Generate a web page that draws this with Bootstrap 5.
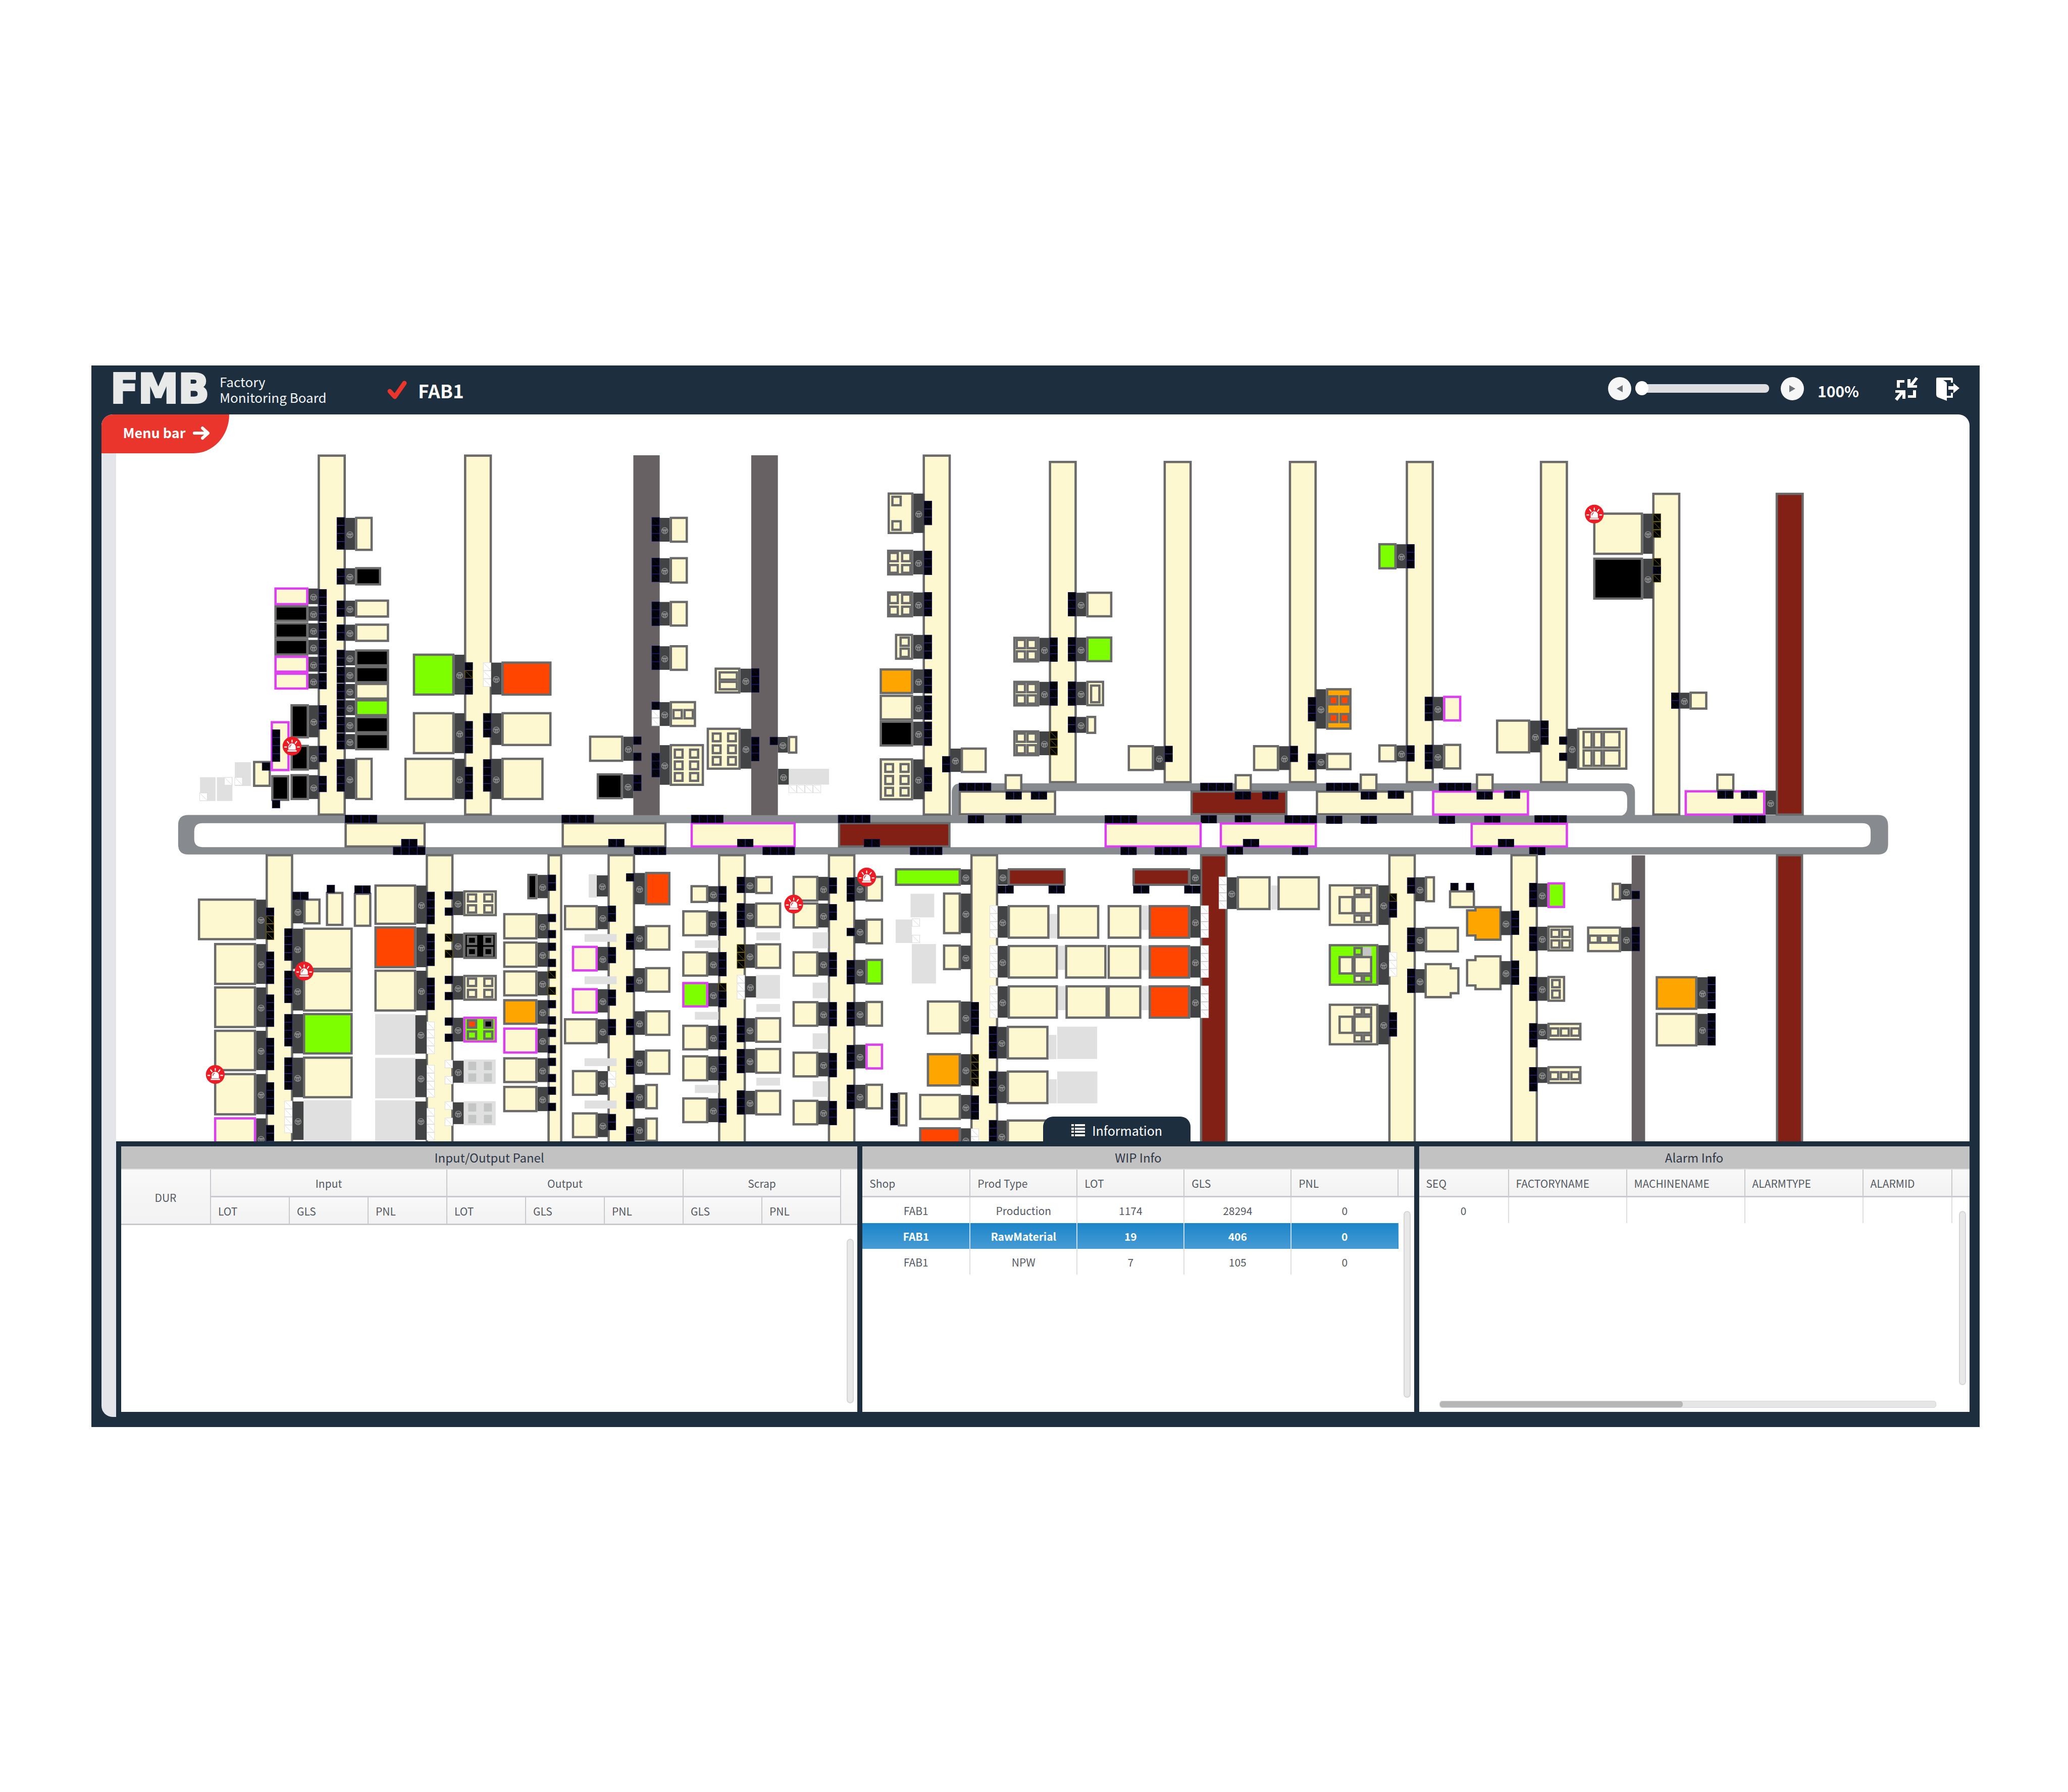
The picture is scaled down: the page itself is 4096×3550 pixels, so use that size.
<!DOCTYPE html>
<html lang="en">
<head>
<meta charset="utf-8">
<meta name="viewport" content="width=device-width, initial-scale=1">
<title>FMB Factory Monitoring Board</title>
<link href="https://cdn.jsdelivr.net/npm/bootstrap@5.3.0/dist/css/bootstrap.min.css" rel="stylesheet">
<style>
  :root { --navy: #1d2e3f; --red: #e9352c; --line: #c9cacf; }
  body { background: #fff; font-family: "Noto Sans CJK KR", "Noto Sans", sans-serif; color: #555b63; padding: 724px 175px 0 181px; }
  .board { background: var(--navy); padding-bottom: 20px; }
  .topbar { height: 97px; padding: 0 39px 0 38px; color: #fff; }
  .logo { font: 700 80px/92px "DejaVu Sans", sans-serif; color: #e8eae9; width: 216px; padding-bottom: 4px; -webkit-text-stroke: 4px #e8eae9; }
  .tagline { font-size: 26px; line-height: 31px; color: #f1f3f3; width: 332px; padding-bottom: 4px; }
  .fab { font-size: 37px; line-height: 48px; font-weight: 700; color: #fff; gap: 22px; }
  .round-btn { width: 46px; height: 46px; border: 0; border-radius: 50%; background: #f6f6f7; padding: 0; }
  .icon-btn { border: 0; background: none; padding: 0; color: #fff; line-height: 0; }
  .icon-btn + .icon-btn { margin-left: 35px; }
  .tools { padding-bottom: 6px; }
  .zoom-range { appearance: none; width: 265px; height: 28px; margin: 0 23px 0 8px; background: none; }
  .zoom-range::-webkit-slider-runnable-track { height: 17px; border-radius: 8px; background: #dedee0; }
  .zoom-range::-webkit-slider-thumb { appearance: none; width: 26px; height: 28px; margin-top: -6px; border-radius: 50%; background: #fff; }
  .zoom-value { font-size: 30px; line-height: 44px; font-weight: 700; margin: 8px 65px 0 27px; width: 86px; }
  .stage { margin: 0 20px; background: var(--navy); border-radius: 22px 22px 0 22px; overflow: hidden; }
  .menu-tab { left: 0; top: 0; width: 253px; height: 77px; border: 0; background: var(--red); color: #fff; font-size: 27px; font-weight: 700; border-radius: 22px 0 71px 0 / 22px 0 77px 0; z-index: 2; gap: 14px; padding: 0 0 4px 6px; }
  .rail-strip { flex: 0 0 29px; background: #e4e5eb; }
  .plan { background: #fff; }
  #plan { display: block; width: 100%; height: auto; }
  .info-tab { left: 54%; bottom: 0; width: 292px; height: 49px; transform: translateX(-50%); border: 0; background: var(--navy); color: #fff; font-size: 25px; line-height: 40px; border-radius: 20px 20px 0 0; gap: 14px; padding-top: 5px; }
  .panels { padding: 10px 0 10px 10px; gap: 10px; }
  .pane { background: #fff; height: 526px; flex-basis: 0; min-width: 0; overflow: hidden; }
  .pane h2 { margin: 0; height: 46px; font-size: 24px; line-height: 43px; font-weight: 400; text-align: center; color: #2f3848; background: #c2c2c2; border-bottom: 2px solid #dcdcde; }
  .grid { width: 100%; table-layout: fixed; border-collapse: separate; border-spacing: 0; font-size: 21px; line-height: 30px; }
  .grid th { font-weight: 400; height: 55px; padding: 2px 0 0 14px; background: linear-gradient(#f9f9f9, #f2f2f2); border-right: 2px solid var(--line); border-bottom: 3px solid var(--line); }
  .grid th:last-child { border-right: 0; }
  .grid th.mid { text-align: center; padding: 2px 0 0; }
  .grid th.edge { border-right: 2px solid var(--line); }
  .grid td { height: 51px; padding: 0; text-align: center; border-right: 2px solid #dedede; }
  .wip td:nth-child(5) { border-right-color: transparent; }
  .grid td:last-child { border-right: 0; }
  .grid tr.picked td:not(:last-child) { background: linear-gradient(#1b84c9, #479cd4); color: #fff; font-weight: 700; border-right-color: #c9def0; }
  .grid tr.picked td:nth-child(5) { border-right-color: #3591cf; }
  .vbar { right: 7px; width: 14px; border-radius: 7px; background: #e8e8e8; border: 2px solid #d6d6d6; }
  .io-bar { top: 183px; bottom: 17px; }
  .wip-bar { top: 128px; bottom: 28px; }
  .alarm-bar { top: 128px; bottom: 53px; }
  .hbar { left: 40px; right: 66px; bottom: 8px; height: 14px; border-radius: 5px; background: #e6e6e6; border: 1px solid #d6d6d6; }
  .hbar div { width: 49%; height: 100%; border-radius: 5px; background: #b6b6b6; }
</style>
<script src="https://cdn.jsdelivr.net/npm/bootstrap@5.3.0/dist/js/bootstrap.bundle.min.js"></script>
</head>
<body>
<div class="board">
  <header class="topbar d-flex align-items-center">
    <div class="logo">FMB</div>
    <div class="tagline">Factory<br>Monitoring Board</div>
    <div class="fab d-flex align-items-center">
      <svg width="39" height="38" viewBox="0 0 39 38" aria-hidden="true"><path d="M5 21 L15 32 L34 5" fill="none" stroke="#e9352c" stroke-width="9" stroke-linecap="round" stroke-linejoin="round"/></svg>
      <span>FAB1</span>
    </div>
    <div class="tools d-flex align-items-center ms-auto">
      <button class="round-btn" type="button" aria-label="Zoom out"><svg width="46" height="46" viewBox="0 0 46 46"><path d="M29 16v14L17 23z" fill="#6b7079"/></svg></button>
      <input class="zoom-range" type="range" min="100" max="400" value="100" aria-label="Zoom">
      <button class="round-btn" type="button" aria-label="Zoom in"><svg width="46" height="46" viewBox="0 0 46 46"><path d="M17 16v14l12-7z" fill="#6b7079"/></svg></button>
      <span class="zoom-value">100%</span>
      <button class="icon-btn" type="button" aria-label="Exit full screen"><svg width="48" height="48" viewBox="0 0 48 48" fill="currentColor"><path d="M6 7h15v5h-9v10H6zM44 27v15H28v-5h10V27z"/><path d="M27 5v17h19v-5h-8l10-13-5-3-10 13V5zM3 27h20v17h-6V35L7 48l-5-4 10-12H3z"/></svg></button>
      <button class="icon-btn" type="button" aria-label="Log out"><svg width="48" height="48" viewBox="0 0 48 48" fill="currentColor"><path d="M3 2h28q3 0 3 3v7h-4V7H15l7 5v26h8v-6h4v10H22v6L4 41q-3-2-3-5V5q0-3 2-3z"/><path d="M25 19h10v-6l12 10-12 10v-7H25z"/></svg></button>
    </div>
  </header>

  <main class="stage position-relative d-flex">
    <button class="menu-tab position-absolute d-flex align-items-center justify-content-center" type="button">Menu bar
      <svg width="36" height="28" viewBox="0 0 36 28" aria-hidden="true"><path d="M3 14h26M19 4l11 10-11 10" fill="none" stroke="#fff" stroke-width="6" stroke-linecap="round" stroke-linejoin="round"/></svg>
    </button>
    <div class="rail-strip"></div>
    <div class="flex-grow-1 overflow-hidden">
      <div class="plan position-relative">
        <svg id="plan" viewBox="252 902 4034 1583" role="img" aria-label="FAB1 floor plan"></svg>
        <button class="info-tab position-absolute d-flex align-items-center justify-content-center" type="button">
          <svg width="27" height="24" viewBox="0 0 27 24" fill="#fff" aria-hidden="true"><path d="M0 0h5v4H0zM7 0h20v4H7zM0 7h5v4H0zM7 7h20v4H7zM0 13h5v4H0zM7 13h20v4H7zM0 20h5v4H0zM7 20h20v4H7z"/></svg>
          Information
        </button>
      </div>
      <div class="panels d-flex">
        <section class="pane position-relative" style="flex-grow:1458">
          <h2>Input/Output Panel</h2>
          <table class="grid">
            <colgroup><col style="width:178px"><col span="8" style="width:156px"><col></colgroup>
            <thead>
              <tr><th class="mid" rowspan="2">DUR</th><th class="mid" colspan="3">Input</th><th class="mid" colspan="3">Output</th><th class="mid" colspan="2">Scrap</th><th rowspan="2"></th></tr>
              <tr><th>LOT</th><th>GLS</th><th>PNL</th><th>LOT</th><th>GLS</th><th>PNL</th><th>GLS</th><th class="edge">PNL</th></tr>
            </thead>
          </table>
          <div class="vbar io-bar position-absolute"></div>
        </section>
        <section class="pane position-relative" style="flex-grow:1092">
          <h2>WIP Info</h2>
          <table class="grid wip">
            <colgroup><col style="width:214px"><col span="4" style="width:212px"><col></colgroup>
            <thead><tr><th>Shop</th><th>Prod Type</th><th>LOT</th><th>GLS</th><th>PNL</th><th></th></tr></thead>
            <tbody>
              <tr><td>FAB1</td><td>Production</td><td>1174</td><td>28294</td><td>0</td><td></td></tr>
              <tr class="picked"><td>FAB1</td><td>RawMaterial</td><td>19</td><td>406</td><td>0</td><td></td></tr>
              <tr><td>FAB1</td><td>NPW</td><td>7</td><td>105</td><td>0</td><td></td></tr>
            </tbody>
          </table>
          <div class="vbar wip-bar position-absolute"></div>
        </section>
        <section class="pane position-relative" style="flex-grow:1090">
          <h2>Alarm Info</h2>
          <table class="grid">
            <colgroup><col style="width:178px"><col span="3" style="width:234px"><col style="width:176px"><col></colgroup>
            <thead><tr><th>SEQ</th><th>FACTORYNAME</th><th>MACHINENAME</th><th>ALARMTYPE</th><th>ALARMID</th><th></th></tr></thead>
            <tbody><tr><td>0</td><td></td><td></td><td></td><td></td><td></td></tr></tbody>
          </table>
          <div class="vbar alarm-bar position-absolute"></div>
          <div class="hbar position-absolute"><div></div></div>
        </section>
      </div>
    </div>
  </main>
</div>

<script>
/* Floor plan. Every sheet has its origin and its units per plan unit (ox, oy, kx, ky).
   L/Z lane, B box, b inner box, G idle area, A robot arm, H/V row or column of ports,
   M machine (armOuter boxInner boxFar top bottom fill portTop ports), Y outline, S alarm. */
const sheets = [
{ o: [380, 980, 1.742, 1.742], d: `
L 541 16 648 1386;L 1096 16 1202 1386
M 644 683 750 252 382 c 254 kkkk;M 644 683 782 443 513 k 448 kk;M 644 683 812 566 635 c 570 kk;M 644 683 812 657 727 c 661 kk
M 644 683 812 755 820 k 757 kk;M 644 683 812 818 884 k 821 kk;M 644 683 812 882 946 c 884 kk;M 644 683 812 944 1009 g 947 kk;M 644 683 812 1008 1074 k 1010 kk;M 644 683 812 1072 1138 k 1073 kk
M 644 683 750 1166 1327 c 1172 kkkk
M 545 506 377 520 588 p 527 kk;M 545 506 377 588 651 k 589 kk;M 545 506 377 652 715 k 654 kk;M 545 506 377 715 779 k 718 kk;M 545 506 377 779 844 p 780 kk;M 545 506 377 843 908 p 845 kk
M 545 508 438 963 1093 k 967 kkk;M 545 508 438 1117 1215 k 1121 kk;M 545 508 438 1228 1327 k 1235 kk
B 365 1232 434 1330 k;B 296 1178 364 1277 c;H 330 1184 k;B 363 1027 435 1217 p;V 368 1059 kkkk;V 368 1327 k
G 227 1183 288 1273;G 95 1240 154 1330;G 159 1240 218 1330;V 226 1240 w;V 187 1240 w;V 93 1299 w
M 1099 1060 902 771 931 g 804 kykk;M 1099 1060 902 993 1153 c 1027 kkkk;M 1099 1060 870 1166 1327 c 1201 kkkk
M 1199 1238 1428 801 931 r 805 www;M 1199 1238 1428 993 1122 c 997 kkk;M 1199 1238 1398 1166 1327 c 1172 kkkk
B 643 1410 951 1507 c;H 644 1383 kkkk;H 858 1474 kk;H 827 1504 kkkk;S 444 1122` },
{ o: [1240, 980, 1.742, 1.742], d: `
Z 240 19 340 1384;Z 687 19 788 1384;L 1337 16 1444 1386
M 340 378 447 252 351 c 254 kkk;M 340 378 447 405 506 c 408 kkk;M 340 378 447 571 669 c 574 kkk;M 340 378 447 739 837 c 741 kkk
M 340 378 478 951 1050 c 954 kww;b 388 981 428 1021;b 430 981 470 1021
M 340 378 508 1114 1273 c 1148 kkk;b 393 1131 431 1170;b 451 1131 490 1170;b 393 1176 431 1214;b 451 1176 490 1214;b 393 1220 431 1258;b 451 1220 490 1258
M 240 202 72 1082 1182 c 1086 k_k;M 240 200 101 1225 1324 k 1231 kk
M 687 646 548 824 923 c 827 kkk;b 563 838 637 874;b 563 874 637 911
M 687 647 518 1052 1212 c 1087 kkk;b 537 1070 575 1108;b 595 1070 633 1108;b 537 1115 575 1153;b 595 1115 633 1153;b 537 1159 575 1197;b 595 1159 633 1197
M 788 826 862 1083 1151 c 1087 k;A 789 1208 830 1268;G 830 1208 982 1268;H 829 1269 wwww
M 1342 1302 1204 160 318 c 192 kkk;b 1218 172 1258 213;b 1218 265 1258 306
M 1342 1301 1202 377 475 c 381 kkk;b 1207 385 1247 425;b 1255 385 1295 425;b 1207 431 1247 469;b 1255 431 1295 469
M 1342 1301 1202 535 634 c 538 kkk;b 1207 543 1247 584;b 1255 543 1295 584;b 1207 589 1247 628;b 1255 589 1295 628
M 1342 1301 1232 696 795 c 700 kkk;b 1249 706 1289 746;b 1249 748 1289 788
M 1342 1301 1174 827 925 o 830 kkk;M 1342 1301 1174 927 1025 c 930 kkk;M 1342 1301 1174 1025 1124 k 1029 kkk
M 1342 1301 1174 1168 1328 c 1202 kkk;b 1191 1186 1229 1224;b 1249 1186 1288 1224;b 1191 1231 1229 1270;b 1249 1231 1288 1270;b 1191 1276 1229 1314;b 1249 1276 1288 1314
B -32 1410 366 1507 c;H -32 1383 kkkk;H 145 1474 kk;H 242 1504 kkkk
B 457 1410 856 1507 p;H 459 1383 kkkk;H 634 1474 kk;H 730 1504 kkkk
B 1016 1410 1443 1507 d;H 1016 1383 kkkk;H 1114 1474 kk;H 1289 1504 kkkk` },
{ o: [2060, 980, 1.742, 1.742], d: `
L 387 40 493 1263;L 822 40 929 1263;L 1297 40 1403 1263
M 13 53 152 1127 1224 c 1160 kk
M 490 529 628 536 634 c 538 kkk;M 490 529 628 706 804 g 709 kkk;M 490 529 597 874 971 c 877 kkk;b 543 888 583 960;M 490 529 567 1007 1076 c 1010 kk
M 390 351 252 707 805 c 710 kkk;b 261 715 301 755;b 302 715 342 755;b 261 758 301 798;b 302 758 342 798
M 390 351 252 874 972 c 877 kkk;b 261 882 301 922;b 302 882 342 922;b 261 925 301 965;b 302 925 342 965
M 390 351 252 1062 1161 c 1065 yyy;b 261 1070 301 1110;b 302 1070 342 1110;b 261 1114 301 1154;b 302 1114 342 1154
M 826 786 686 1118 1217 c 1121 kk;M 1301 1260 1161 1118 1217 c 1121 kk
M 1400 1438 1535 902 1060 o 936 kkk;b 1447 929 1486 968 r;b 1489 929 1528 968 r;b 1447 996 1486 1035 r;b 1489 996 1528 1035 r
M 1400 1438 1535 1147 1214 c 1150 kk
B 45 1290 415 1385 c;B 219 1228 287 1294 c;H 46 1261 kkkk;H 223 1294 kk;H 319 1294 kk;H 80 1384 kk;H 223 1384 kk
B 924 1290 1292 1385 d;B 1091 1228 1157 1294 c;H 961 1261 kkkk;H 1092 1294 kk;H 1196 1294 kk;H 963 1384 kk;H 1092 1384 kk
B 598 1411 967 1507 p;H 599 1384 kkkk;H 659 1504 kk;H 788 1504 kkkk
B 1035 1411 1404 1507 p;H 1281 1384 kkkk;H 1123 1474 kk;H 1062 1503 kk;H 1309 1504 kk` },
{ o: [2860, 980, 1.206, 1.742], d: `
L 240 40 314 1263;L 592 40 666 1263;L 887 161 961 1386;L 1211 161 1285 1386 d
M 242 216 168 352 452 g 356 kkk;M 242 216 168 1115 1184 c 1119 kk;M 311 338 386 931 1029 p 935 kkk;M 311 338 386 1113 1211 c 1117 kkk
M 594 567 477 1021 1150 c 1025 kkk
M 664 690 822 1052 1212 c 1086 k_k;b 704 1064 731 1132;b 731 1064 757 1132;b 757 1064 804 1132;b 704 1134 731 1201;b 731 1134 757 1201;b 757 1134 804 1201
M 889 863 732 236 397 c 240 yyy;M 889 863 732 407 567 k 409 yky;S 735 242
M 958 985 1032 915 984 c 919 kk
B 4 1290 260 1385 c;B 119 1226 166 1294 c;H 31 1261 kkkk;H 122 1294 kk;H 193 1291 kk;H 31 1386 kk;H 122 1386 kk
B 309 1290 564 1386 p;B 424 1226 471 1294 c;H 327 1261 kkkk;H 426 1294 kk;H 498 1291 kk;H 327 1386 kk;H 446 1386 kk;H 578 1384 kkkk
B 410 1412 666 1507 p;H 482 1474 kk;H 424 1505 kk;H 564 1505 kk
A 1184 1291 1212 1382;B 972 1289 1184 1386 p;B 1055 1226 1103 1294 c;H 1058 1291 kk;H 1120 1291 kk;H 1100 1384 kkkk` },
{ o: [380, 1760, 1.845, 2.119], d: `
L 364 210 475 1700;L 1007 210 1119 1700;L 1496 210 1556 1700
M 366 326 92 415 608 c 457 kyyy;M 366 326 157 620 814 c 660 kkkk;M 366 326 157 820 1013 c 858 kkkk;M 366 326 157 1020 1212 c 1058 kkkk;M 366 326 157 1220 1416 c 1263 kkkk;M 366 326 157 1424 1620 p 1460 kkkk
M 472 516 585 415 535 c 0 -;H 472 384 kk;B 606 384 677 542 c;V 610 352 k;B 718 388 789 546 c;H 721 355 kk
M 472 514 714 549 745 c 553 kkkk;M 472 514 714 745 937 c 748 kkkk;M 472 514 714 943 1135 g 948 kkkk;M 472 514 714 1144 1337 c 1148 kkkk;M 472 517 709 1346 1534 e 1348 wwww
S 162 1227;S 519 750
M 1011 969 801 350 537 c 384 kkkk;M 1011 969 801 543 737 r 577 kkkk;M 1011 969 801 743 937 c 780 kkkk;M 1011 965 804 948 1136 e 983 wwww;M 1011 965 804 1150 1337 e 1183 wwww;M 1011 965 804 1346 1534 e 1382 wwww
M 1116 1158 1293 377 497 c 382 k_k;b 1172 391 1214 434;b 1238 391 1279 434;b 1172 441 1214 485;b 1238 441 1279 485
M 1116 1158 1293 572 694 k 577 y_y;b 1172 586 1214 630 k;b 1238 586 1279 630 k;b 1172 638 1214 682 k;b 1238 638 1279 682 k
M 1116 1158 1293 767 887 c 772 k_k;b 1172 779 1214 824;b 1238 779 1279 824;b 1172 831 1214 875;b 1238 831 1279 875
M 1116 1158 1293 960 1080 q 964 k_k;b 1172 972 1214 1016 r;b 1238 972 1279 1016 k;b 1172 1023 1214 1067 g;b 1238 1023 1279 1067 g
M 1116 1160 1288 1158 1270 e 1160 w_w;g 1178 1168 1210 1207;g 1241 1168 1273 1207;g 1178 1222 1210 1260;g 1241 1222 1273 1260
M 1116 1160 1288 1350 1461 e 1352 w_w;g 1178 1360 1210 1398;g 1241 1360 1273 1398;g 1178 1413 1210 1452;g 1241 1413 1273 1452
M 1498 1456 1415 301 419 k 305 kk
M 1498 1456 1318 482 604 c 486 k_k;M 1498 1456 1318 613 735 c 619 k_k;M 1498 1456 1318 746 867 c 748 y_y;M 1498 1456 1318 879 998 o 884 k_k;M 1498 1456 1318 1010 1131 p 1017 k_k;M 1498 1456 1318 1147 1267 c 1150 k_k;M 1498 1456 1318 1279 1401 c 1283 k_k` },
{ o: [1180, 1760, 1.845, 2.119], d: `
L 261 210 372 1700;L 705 210 817 1700;L 1146 210 1257 1700
M 263 218 186 303 411 e 0 -;M 263 222 86 445 562 c 448 kk;M 263 222 118 633 752 p 639 kk;M 263 222 118 828 946 p 835 kk;M 263 222 86 967 1088 c 971 kk;M 263 222 118 1206 1326 c 1211 ww;M 263 222 118 1401 1521 c 1409 kk
G 169 579 298 615;G 169 774 298 810;G 169 1152 298 1188;G 169 1347 298 1384
M 368 412 514 292 447 r 299 k;M 368 412 514 537 656 c 577 kk;M 368 412 514 731 850 c 773 kk;M 368 412 514 930 1049 c 970 kk;M 368 412 514 1111 1229 c 1152 kk;M 368 412 464 1270 1388 c 1311 kk;M 368 412 464 1425 1538 c 1466 kk
M 707 666 594 353 436 c 358 kk;M 707 666 561 469 590 c 475 kkk;M 707 666 561 658 776 c 662 kkk;M 707 666 561 800 918 q 805 ykk;M 707 666 561 997 1116 c 1001 kkk;M 707 666 561 1138 1259 c 1143 kkk;M 707 666 561 1332 1452 c 1337 kkk
G 612 608 707 643;G 612 938 707 974;G 612 1275 707 1312
M 813 854 925 311 395 c 315 kk;M 813 854 959 433 552 c 437 kkk;M 813 854 959 621 740 c 626 yyy;M 813 858 954 768 877 e 768 www;M 813 854 959 962 1081 c 966 kkk;M 813 854 959 1104 1224 c 1109 kkk;M 813 854 959 1297 1416 c 1300 kkk
G 859 571 954 608;G 859 902 954 938;G 859 1242 954 1278
M 1150 1108 1004 310 430 c 318 kk;M 1150 1108 1004 433 554 c 441 kk;M 1150 1108 1004 658 776 c 663 kkk;M 1150 1108 1004 888 1007 c 893 kkk;M 1150 1108 1004 1121 1241 c 1128 kkk;M 1150 1108 1004 1343 1462 c 1349 kkk
G 1085 571 1147 645;G 1085 803 1147 875;G 1085 1037 1147 1109;G 1085 1258 1147 1330
M 1254 1297 1368 310 430 c 318 kkk;M 1254 1297 1368 507 627 c 551 k;M 1254 1297 1368 693 813 g 699 kkk;M 1254 1297 1368 887 1007 c 893 kkk;M 1254 1297 1368 1084 1204 p 1091 kkk;M 1254 1297 1368 1269 1388 c 1274 kkk
S 1009 441;S 1302 316;V 1397 1312 kkkk;B 1427 1309 1466 1467 c` },
{ o: [1920, 1760, 1.845, 2.119], d: `
L 353 210 465 1700;L 1275 210 1386 1700 d
M 355 315 50 275 357 g 0 -;M 355 315 243 387 580 c 0 -;M 355 315 243 627 746 c 0 -;M 355 315 178 885 1043 c 893 kkkk;M 355 315 178 1128 1283 o 1133 yyyy;M 355 315 147 1316 1437 c 1323 kkk;M 355 315 147 1470 1590 r 1476 ww
G 113 393 208 502;G 53 512 118 620;G 118 625 215 807;V 118 507 w;V 118 583 w
M 465 503 736 275 357 d 0 -;H 462 355 kk;H 667 355 kk
G 671 486 702 598;G 705 633 733 744;G 705 819 737 930;G 1040 448 1069 560;G 1040 633 1069 745;G 1040 819 1069 930
M 463 503 671 445 601 c 447 wwww;M 463 503 705 629 785 c 631 wwww;M 463 503 705 815 970 c 817 wwww
B 702 445 871 601 c;B 733 629 900 785 c;B 735 815 905 970 c;B 904 445 1040 601 c;B 904 630 1040 786 c;B 904 815 1040 970 c
M 1278 1236 1069 445 601 r 447 wwww;M 1278 1236 1069 630 785 r 631 wwww;M 1278 1236 1069 815 970 r 817 wwww
M 1278 1236 1004 275 357 d 0 -;H 1007 355 kk;H 1212 355 kk
M 460 499 667 1002 1158 c 1004 kkkk;M 460 499 667 1208 1364 c 1211 kkkk;M 460 499 667 1434 1590 c 1437 kkkk
G 667 1044 699 1156;G 702 1006 862 1155;G 667 1249 700 1360;G 702 1213 863 1360
M 1383 1423 1559 312 469 c 314 wwww` },
{ o: [2760, 1760, 1.2645, 2.119], d: `
L 330 210 406 1700;L 666 210 742 1700;Z 1000 216 1037 1700;L 1397 210 1472 1700 d
G 8 355 26 466;B 25 312 142 469 c
M 332 303 166 349 542 c 391 ykk;b 234 361 260 403;b 260 361 286 403;b 193 403 235 488;b 234 403 286 488;b 234 488 260 529;b 260 488 286 529
M 332 303 166 625 818 g 663 www;b 234 638 260 680 g;g 260 640 284 680;b 193 680 235 766;b 234 680 286 766;b 234 766 260 805;b 260 766 286 805 g
M 332 303 166 900 1093 c 940 kkk;b 234 913 260 955;b 260 913 286 955;b 193 955 235 1040;b 234 955 286 1040;b 234 1040 260 1080;b 260 1040 286 1080
M 404 431 459 312 433 c 318 kk;V 501 343 k;V 544 343 k;B 497 377 569 460 c
Y o 570 455 639 455 639 605 570 605 570 586 547 586 547 470 570 470;A 640 474 668 584;V 668 471 kkk
Y c 570 682 639 682 639 833 570 833 570 816 547 816 547 699 570 699;A 640 704 668 812;V 668 701 kkk
M 404 431 525 545 664 c 549 kkk;A 404 741 431 850;V 382 739 kkk;Y c 433 718 502 718 502 737 523 737 523 852 502 852 502 870 433 870
M 740 768 817 340 459 q 343 kkk
M 740 768 840 540 660 c 545 kkk;b 776 554 804 598;b 805 554 833 598;b 776 603 804 647;b 805 603 833 647
M 740 768 817 772 892 c 776 kkk;b 778 786 805 830;b 778 834 805 878
M 740 768 862 988 1070 c 990 kkk;b 773 1009 801 1053;b 802 1009 830 1053;b 831 1009 859 1053
M 740 768 862 1188 1271 c 1193 kkk;b 773 1211 801 1254;b 802 1211 830 1254;b 831 1211 859 1254
M 1000 971 945 342 425 c 380 k;M 1000 971 877 544 663 c 546 kkk;b 881 581 910 624;b 910 581 939 624;b 939 581 968 624
M 1209 1181 1066 773 929 o 775 kkkk;M 1209 1181 1066 942 1098 c 944 kkkk` }
];
const fills = { c: '#fef8d1', k: '#000', g: '#7dff00', o: '#ffa500', r: '#ff4500', d: '#832016', p: '#fef8d1', q: '#7dff00' };
const edge = '#6a6a6a', pink = '#dd3ff0', N = 17.6;
const f = n => n.toFixed(1);
const R = (x0, y0, x1, y1, fill, extra = '') => `<rect x="${f(x0)}" y="${f(y0)}" width="${f(x1 - x0)}" height="${f(y1 - y0)}" fill="${fill}" ${extra}/>`;
const framed = (x0, y0, x1, y1, c, w = 5) => R(x0 + w / 2, y0 + w / 2, x1 - w / 2, y1 - w / 2, fills[c || 'c'], `stroke="${c === 'p' || c === 'q' ? pink : edge}" stroke-width="${w}"`);
const looks = { k: ['#020208', '#12125c', '#0c0c38'], y: ['#050500', '#75610a', '#8a7410'], w: ['#fff', '#d8d8d8', '#cfcfcf'] };
const port = (x, y, k) => R(x + .5, y + .5, x + N - .5, y + N - .5, looks[k][0], `stroke="${looks[k][1]}"`) +
  `<path d="M${f(x + 2)} ${f(y + 2)}L${f(x + N - 2)} ${f(y + N - 2)}" stroke="${looks[k][2]}"/>`;
const ports = (x, y, s, dx, dy) => [...s].map((k, i) => looks[k] ? port(x + i * dx, y + i * dy, k) : '').join('');
const arm = (x0, y0, x1, y1) => { const cx = (x0 + x1) / 2, cy = (y0 + y1) / 2 + 2;
  return R(x0, y0, x1, y1, '#414345') + `<circle cx="${f(cx)}" cy="${f(cy)}" r="6.5" fill="none" stroke="#8c8c8c" stroke-width="1.8"/>` +
    `<path d="M${f(cx - 5)} ${f(cy - 3)}h10v3h-2v5h-6v-5h-2z" fill="#8c8c8c"/><path d="M${f(cx)} ${f(cy)}v5" stroke="#414345" stroke-width="1.5"/>`; };
const alarm = (x, y) => `<g transform="translate(${f(x)} ${f(y)})"><circle r="20.5" fill="#ed1c24"/><path d="M-10 9h20v3h-20zM-8 8V2a8 8 0 0 1 16 0v6z" fill="#fff"/><path d="M-5 3q0-5 4-6" stroke="#ed1c24" stroke-width="1.5" fill="none"/><path d="M0-13v4M-10-10l3 4M10-10l-3 4M-16 2h4M16 2h-4" stroke="#fff" stroke-width="2.4" stroke-linecap="round"/></g>`;

let drawing = '<path fill="#878a8f" fill-rule="evenodd" d="M409 1774H2071V1725Q2071 1705 2091 1705H3540Q3558 1705 3558 1725V1774H4087Q4109 1774 4109 1798V1838Q4109 1860 4087 1860H409Q387 1860 387 1838V1796Q387 1774 409 1774Z' +
  'M440 1792Q422 1792 422 1810V1826Q422 1844 440 1844H4053Q4071 1844 4071 1826V1810Q4071 1792 4053 1792ZM2087 1722V1775H3530Q3541 1771 3541 1757V1739Q3541 1722 3528 1722Z"/>';
let alarms = '';
for (const { o: [ox, oy, kx, ky], d } of sheets) {
  const X = v => ox + v / kx, Y = v => oy + v / ky;
  for (const item of d.trim().split(/[;\n]+/)) {
    const t = item.trim().split(' '), n = t.map(Number), q = [X(n[1]), Y(n[2]), X(n[3]), Y(n[4])];
    switch (t[0]) {
      case 'L': case 'B': drawing += framed(...q, t[5]); break;
      case 'b': drawing += framed(...q, t[5]); break;
      case 'Z': drawing += R(...q, '#686163'); break;
      case 'G': drawing += R(...q, '#e0e0e0'); break;
      case 'g': drawing += R(...q, '#c4c5c5'); break;
      case 'A': drawing += arm(...q); break;
      case 'H': drawing += ports(q[0], q[1], t[3], N, 0); break;
      case 'V': drawing += ports(q[0], q[1], t[3], 0, N); break;
      case 'S': alarms += alarm(q[0], q[1]); break;
      case 'Y': drawing += `<polygon points="${n.slice(2).map((v, i) => f(i % 2 ? Y(v) : X(v))).join(' ')}" fill="${fills[t[1]]}" stroke="${edge}" stroke-width="5"/>`; break;
      case 'M': {
        const a = X(n[1]), i = X(n[2]), far = X(n[3]), y0 = Y(n[4]), y1 = Y(n[5]), right = far > a;
        drawing += arm(Math.min(a, i), y0 + 2.5, Math.max(a, i), y1 - 2.5);
        drawing += t[6] === 'e' ? R(Math.min(i, far), y0, Math.max(i, far), y1, '#e0e0e0') : framed(Math.min(i, far), y0, Math.max(i, far), y1, t[6]);
        drawing += ports(right ? a - N : a, Y(n[7]), t[8], 0, N);
      }
    }
  }
}
document.getElementById('plan').innerHTML = drawing + alarms;
</script>
</body>
</html>
